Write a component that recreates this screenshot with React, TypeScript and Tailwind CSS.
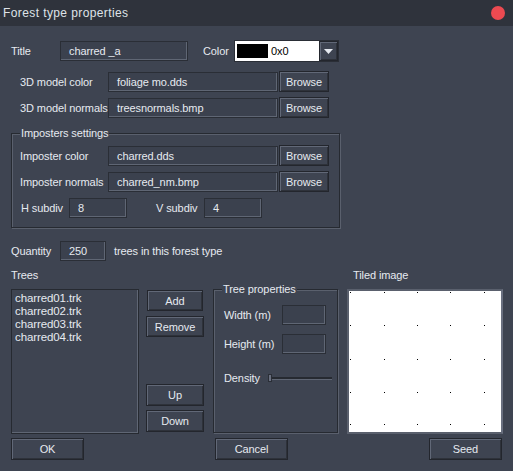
import React from "react";

const btn =
  "flex items-center justify-center bg-[#3e4451] border border-[#23262d] shadow-[inset_1px_1px_0_#616877,inset_-1px_-1px_0_#2e323a] text-[#e6eaf0] whitespace-nowrap";
const field =
  "flex items-center bg-[#3b414e] border border-[#2a2e36] shadow-[inset_-1px_-1px_0_#5f6674] pl-[8px] text-[#e6eaf0] whitespace-nowrap";
const group =
  "relative border border-[#262a31] shadow-[inset_1px_1px_0_#5a606d,1px_1px_0_#5a606d]";

function Legend({ children }: { children: React.ReactNode }) {
  return (
    <span className="absolute left-[8px] top-[-8px] bg-[#3e4451] px-[1px] leading-[14px] whitespace-nowrap">
      {children}
    </span>
  );
}

function FileRow({ label, value }: { label: string; value: string }) {
  return (
    <div className="flex items-center h-[21px]">
      <div className="w-[88px] whitespace-nowrap">{label}</div>
      <div className={`${field} w-[170px] h-[20px]`}>{value}</div>
      <div className={`${btn} ml-[1px] w-[50px] h-[21px]`}>Browse</div>
    </div>
  );
}

const dotsX = [2, 36, 69, 102, 136];
const dotsY = [2, 35, 69, 102, 134];

export default function App() {
  return (
    <div
      className="w-[513px] h-[471px] bg-[#3e4451] text-[#e6eaf0] text-[11px] tracking-[-0.1px] leading-[14px] overflow-hidden"
      style={{ fontFamily: '"Liberation Sans", Arial, sans-serif' }}
    >
      {/* title bar */}
      <div className="h-[26px] bg-[#2f333c] flex items-center justify-between pl-[3px] pr-[8px]">
        <span className="text-[12px] tracking-[0.4px] text-[#dfe3e8]">Forest type properties</span>
        <span className="w-[14px] h-[14px] rounded-full bg-[#ec4a51]" />
      </div>

      <div className="pl-[11px]">
        {/* title / color */}
        <div className="flex items-center h-[22px] mt-[14px]">
          <div className="w-[49px]">Title</div>
          <div className={`${field} w-[128px] h-[20px]`}>charred _a</div>
          <div className="ml-[15px] w-[31px]">Color</div>
          <div className="flex items-center h-[22px] border border-[#2a2e36] bg-[#565c69]">
            <div className="flex items-center w-[84px] h-[20px] bg-white pl-[2px]">
              <div className="w-[31px] h-[14px] bg-black" />
              <span className="ml-[3px] text-black">0x0</span>
            </div>
            <div className={`${btn} w-[19px] h-[20px]`}>
              <svg width="9" height="5" viewBox="0 0 9 5">
                <path d="M0 0h9L4.5 5z" fill="#e6eaf0" />
              </svg>
            </div>
          </div>
        </div>

        {/* 3D model rows */}
        <div className="pl-[9px] mt-[9px] flex flex-col gap-[5px]">
          <FileRow label="3D model color" value="foliage mo.dds" />
          <FileRow label="3D model normals" value="treesnormals.bmp" />
        </div>

        {/* imposters */}
        <div className={`${group} w-[329px] h-[95px] mt-[15px] pt-[11px] pl-[8px]`}>
          <Legend>Imposters settings</Legend>
          <div className="flex flex-col gap-[5px]">
            <FileRow label="Imposter color" value="charred.dds" />
            <FileRow label="Imposter normals" value="charred_nm.bmp" />
          </div>
          <div className="flex items-center h-[20px] mt-[6px] pl-[1px]">
            <div className="w-[48px] whitespace-nowrap">H subdiv</div>
            <div className={`${field} w-[58px] h-[20px] pl-[6px]`}>8</div>
            <div className="ml-[29px] w-[48px] whitespace-nowrap">V subdiv</div>
            <div className={`${field} w-[58px] h-[20px] pl-[6px]`}>4</div>
          </div>
        </div>

        {/* quantity */}
        <div className="flex items-center h-[20px] mt-[13px]">
          <div className="w-[49px]">Quantity</div>
          <div className={`${field} w-[46px] h-[20px] pl-[4px]`}>250</div>
          <div className="ml-[8px] whitespace-nowrap">trees in this forest type</div>
        </div>

        {/* labels row */}
        <div className="flex h-[14px] mt-[7px]">
          <div className="w-[342px]">Trees</div>
          <div>Tiled image</div>
        </div>

        {/* main row */}
        <div className="flex mt-[7px] h-[145px]">
          <div className="w-[128px] h-[145px] border border-[#262a31] shadow-[inset_-1px_-1px_0_#5f6674] pl-[3px] pt-[2px] leading-[13px] text-[11.5px]">
            <div>charred01.trk</div>
            <div>charred02.trk</div>
            <div>charred03.trk</div>
            <div>charred04.trk</div>
          </div>

          <div className="w-[58px] ml-[7px] flex flex-col">
            <div className={`${btn} w-[56px] h-[21px] ml-[1px] mt-[1px]`}>Add</div>
            <div className={`${btn} w-[58px] h-[21px] mt-[5px]`}>Remove</div>
            <div className={`${btn} w-[58px] h-[22px] mt-[47px]`}>Up</div>
            <div className={`${btn} w-[58px] h-[22px] mt-[4px]`}>Down</div>
          </div>

          <div className={`${group} w-[125px] h-[144px] ml-[9px] pl-[10px] pt-[15px]`}>
            <Legend>Tree properties</Legend>
            <div className="flex items-center h-[20px]">
              <div className="w-[58px] whitespace-nowrap">Width (m)</div>
              <div className={`${field} w-[44px] h-[20px]`} />
            </div>
            <div className="flex items-center h-[20px] mt-[9px]">
              <div className="w-[58px] whitespace-nowrap">Height (m)</div>
              <div className={`${field} w-[44px] h-[20px]`} />
            </div>
            <div className="flex items-center h-[20px] mt-[14px]">
              <div className="w-[44px]">Density</div>
              <div className="flex items-center w-[64px]">
                <div className="w-[4px] h-[8px] bg-[#6a7080] border border-[#2a2e36]" />
                <div className="flex-1 h-[3px] bg-[#262a31] border-b border-[#5f6674]" />
              </div>
            </div>
          </div>

          <div className="ml-[9px] w-[156px] h-[145px] border-2 border-[#5a606d] border-r-[#6a7080] bg-white">
            <div className="relative w-full h-full">
              {dotsY.map((y) =>
                dotsX.map((x) => (
                  <span
                    key={`${x}-${y}`}
                    className="absolute w-[1px] h-[1px] bg-black"
                    style={{ left: x - 1, top: y - 1 }}
                  />
                ))
              )}
            </div>
          </div>
        </div>

        {/* bottom buttons */}
        <div className="flex mt-[4px]">
          <div className={`${btn} w-[73px] h-[22px]`}>OK</div>
          <div className={`${btn} w-[73px] h-[22px] ml-[131px]`}>Cancel</div>
          <div className={`${btn} w-[73px] h-[22px] ml-[141px]`}>Seed</div>
        </div>
      </div>
    </div>
  );
}
